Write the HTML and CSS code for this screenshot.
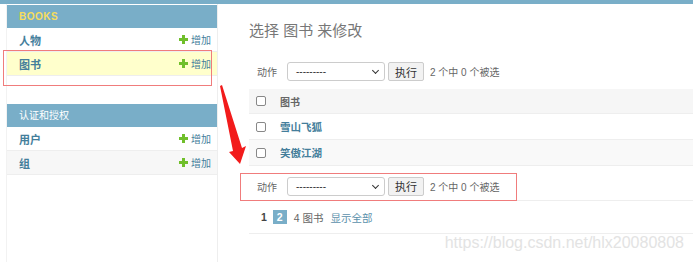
FILE: index.html
```html
<!DOCTYPE html>
<html lang="zh">
<head>
    <meta charset="UTF-8">
    <title>选择 图书 来修改</title>
    <link rel="stylesheet" href="styles.css">
</head>
<body>
<div class="topbar"></div>
<div class="layout">
    <div class="sidebar">
        <div class="module">
            <div class="caption books">BOOKS</div>
            <div class="row"><span class="model">人物</span><span class="add"><i class="plus"></i>增加</span></div>
            <div class="row current"><span class="model">图书</span><span class="add"><i class="plus"></i>增加</span></div>
        </div>
        <div class="module">
            <div class="caption">认证和授权</div>
            <div class="row"><span class="model">用户</span><span class="add"><i class="plus"></i>增加</span></div>
            <div class="row alt"><span class="model">组</span><span class="add"><i class="plus"></i>增加</span></div>
        </div>
    </div>

    <div class="content">
        <h1>选择 图书 来修改</h1>
        <div class="actions">
            <label>动作</label>
            <div class="select">---------<span class="chev"></span></div>
            <button type="button">执行</button>
            <span class="counter">2 个中 0 个被选</span>
        </div>
        <div class="table">
            <div class="tr head"><span class="box"></span><span>图书</span></div>
            <div class="tr"><span class="box"></span><a>雪山飞狐</a></div>
            <div class="tr alt"><span class="box"></span><a>笑傲江湖</a></div>
        </div>
        <div class="actions bottom">
            <label>动作</label>
            <div class="select">---------<span class="chev"></span></div>
            <button type="button">执行</button>
            <span class="counter">2 个中 0 个被选</span>
        </div>
        <div class="paginator">
            <span class="page">1</span>
            <span class="page this">2</span>
            <span class="total">4 图书</span>
            <a>显示全部</a>
        </div>
        <div class="watermark">https://blog.csdn.net/hlx20080808</div>
    </div>
</div>

<!-- red annotations drawn over the screenshot -->
<div class="mark mark-side"></div>
<div class="mark mark-actions"></div>
<svg class="arrow" width="40" height="90" viewBox="0 0 40 90">
    <polygon points="0,2 2,1 22,64 26,62 20,80 9,68 13,67" fill="#f21b1b"/>
</svg>
</body>
</html>
```

FILE: styles.css
```css
body {
    margin: 0;
    font-family: "Liberation Sans", "Noto Sans CJK SC", sans-serif;
    color: #333;
    background: #fff;
    width: 693px;
    height: 262px;
    overflow: hidden;
    position: relative;
}
.topbar {
    height: 4px;
    background: #79aec8;
}
.layout {
    display: flex;
    height: 258px;
}
.sidebar {
    width: 210px;
    margin-left: 6px;
    border-left: 1px solid #f2f2f2;
    border-right: 1px solid #eee;
    padding-top: 1px;
}
.module {
    margin-bottom: 28px;
}
.caption {
    height: 23px;
    line-height: 23px;
    background: #79aec8;
    color: #fff;
    font-size: 10px;
    padding-left: 12px;
}
.caption.books {
    color: #f5dd5d;
    font-weight: bold;
    letter-spacing: 0.5px;
}
.row {
    display: flex;
    justify-content: space-between;
    align-items: center;
    height: 23px;
    border-bottom: 1px solid #eee;
    padding: 0 6px 0 12px;
    font-size: 11px;
}
.row.current {
    background: #ffc;
}
.row.alt {
    background: #f7f7f7;
}
.model {
    color: #447e9b;
    font-weight: bold;
}
.add {
    color: #447e9b;
    font-size: 10px;
    display: flex;
    align-items: center;
}
.plus {
    width: 9px;
    height: 9px;
    margin-right: 3px;
    background:
        linear-gradient(#70bf2b, #70bf2b) center / 9px 3px no-repeat,
        linear-gradient(#70bf2b, #70bf2b) center / 3px 9px no-repeat;
}
.content {
    flex: 1;
    padding-left: 31px;
}
h1 {
    margin: 16px 0 0 0;
    font-size: 15px;
    font-weight: normal;
    color: #777;
    height: 22px;
    line-height: 22px;
}
.actions {
    display: flex;
    align-items: center;
    height: 23px;
    margin-top: 18px;
    padding-left: 8px;
    font-size: 10px;
    color: #666;
}
.actions label {
    width: 30px;
}
.select {
    width: 88px;
    height: 17px;
    border: 1px solid #ccc;
    border-radius: 3px;
    padding-left: 8px;
    font-size: 10px;
    color: #333;
    line-height: 17px;
    position: relative;
}
.chev {
    position: absolute;
    right: 6px;
    top: 5px;
    width: 4px;
    height: 4px;
    border-right: 1.5px solid #333;
    border-bottom: 1.5px solid #333;
    transform: rotate(45deg);
}
button {
    margin-left: 3px;
    height: 19px;
    padding: 0 6px;
    border: 1px solid #ccc;
    border-radius: 2px;
    background: #f2f2f2;
    font: 11px "Liberation Sans", "Noto Sans CJK SC", sans-serif;
    color: #333;
}
.counter {
    margin-left: 6px;
    font-size: 10px;
}
.table {
    margin-top: 6px;
    font-size: 10px;
}
.tr {
    display: flex;
    align-items: center;
    height: 25px;
    border-bottom: 1px solid #eee;
    padding-left: 7px;
}
.tr.head {
    height: 24px;
    background: #f6f6f6;
    font-weight: bold;
    color: #666;
}
.tr.alt {
    background: #f9f9f9;
}
.box {
    width: 8px;
    height: 8px;
    border: 1px solid #888;
    border-radius: 2px;
    margin-right: 14px;
    background: #fff;
}
.tr a {
    color: #447e9b;
    font-weight: bold;
    font-size: 10.5px;
}
.actions.bottom {
    margin-top: 6px;
    border-bottom: 1px solid #eee;
    height: 28px;
}
.paginator {
    display: flex;
    align-items: center;
    height: 32px;
    padding-left: 12px;
    border-bottom: 1px solid #eee;
    font-size: 10.5px;
    color: #666;
}
.page {
    font-weight: bold;
    color: #444;
    margin-right: 6px;
}
.page.this {
    background: #79aec8;
    color: #fff;
    padding: 1px 4px;
    margin-right: 7px;
}
.total {
    margin-right: 7px;
}
.paginator a {
    color: #5b90ab;
}
.watermark {
    text-align: right;
    padding-right: 9px;
    font-size: 16px;
    color: #e3e3e3;
    margin-top: 0;
}
.mark {
    position: absolute;
    border: 1px solid #f07c7c;
}
.mark-side {
    left: 3px;
    top: 50px;
    width: 207px;
    height: 34px;
}
.mark-actions {
    left: 240px;
    top: 173px;
    width: 275px;
    height: 26px;
}
.arrow {
    position: absolute;
    left: 220px;
    top: 84px;
}
```
